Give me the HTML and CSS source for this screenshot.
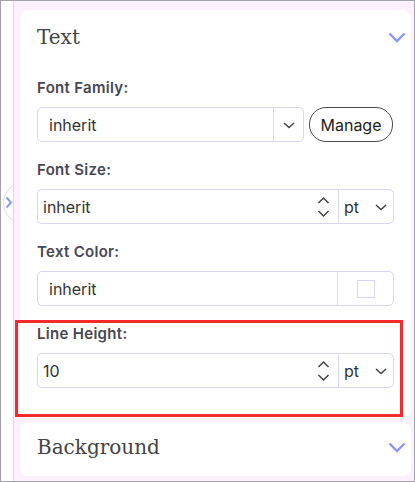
FILE: index.html
```html
<!DOCTYPE html>
<html>
<head>
<meta charset="utf-8">
<link rel="stylesheet" href="styles.css">
</head>
<body>
<div class="frame">
  <div class="gutter">
    <div class="toggle">
      <svg class="toggle-icon" width="8" height="13" viewBox="0 0 8 13"><path d="M1.5 1.5 L6 6.5 L1.5 11.5" fill="none" stroke="#8e96f6" stroke-width="2"/></svg>
    </div>
  </div>
  <div class="panel">
    <section class="card">
      <div class="card-head">
        <h2 class="card-title">Text</h2>
        <svg class="head-chev" width="18" height="11" viewBox="0 0 18 11"><path d="M1.5 1.5 L9 9 L16.5 1.5" fill="none" stroke="#8e96f6" stroke-width="2.4"/></svg>
      </div>
      <div class="card-body">
        <div class="field">
          <label class="label">Font Family:</label>
          <div class="row">
            <div class="box select-box">
              <span class="val val-wide">inherit</span>
              <span class="sel-btn"><svg width="12" height="7" viewBox="0 0 12 7"><path d="M1 1 L6 5.5 L11 1" fill="none" stroke="#444" stroke-width="1.5"/></svg></span>
            </div>
            <button class="manage">Manage</button>
          </div>
        </div>
        <div class="field">
          <label class="label">Font Size:</label>
          <div class="row">
            <div class="box num-box">
              <span class="val val-num">inherit</span>
              <svg class="spin" width="13" height="22" viewBox="0 0 13 22"><path d="M1.5 7 L6.5 2 L11.5 7 M1.5 15 L6.5 20 L11.5 15" fill="none" stroke="#444" stroke-width="1.5"/></svg>
            </div>
            <div class="box unit-box">
              <span class="unit">pt</span>
              <svg width="12" height="7" viewBox="0 0 12 7"><path d="M1 1 L6 5.5 L11 1" fill="none" stroke="#444" stroke-width="1.5"/></svg>
            </div>
          </div>
        </div>
        <div class="field">
          <label class="label">Text Color:</label>
          <div class="box color-box">
            <span class="val val-wide">inherit</span>
            <span class="swatch-cell"><span class="swatch"></span></span>
          </div>
        </div>
        <div class="field highlight">
          <label class="label">Line Height:</label>
          <div class="row">
            <div class="box num-box">
              <span class="val val-num">10</span>
              <svg class="spin" width="13" height="22" viewBox="0 0 13 22"><path d="M1.5 7 L6.5 2 L11.5 7 M1.5 15 L6.5 20 L11.5 15" fill="none" stroke="#444" stroke-width="1.5"/></svg>
            </div>
            <div class="box unit-box">
              <span class="unit">pt</span>
              <svg width="12" height="7" viewBox="0 0 12 7"><path d="M1 1 L6 5.5 L11 1" fill="none" stroke="#444" stroke-width="1.5"/></svg>
            </div>
          </div>
        </div>
      </div>
    </section>
    <section class="card card-collapsed">
      <div class="card-head">
        <h2 class="card-title">Background</h2>
        <svg class="head-chev" width="18" height="11" viewBox="0 0 18 11"><path d="M1.5 1.5 L9 9 L16.5 1.5" fill="none" stroke="#8e96f6" stroke-width="2.4"/></svg>
      </div>
    </section>
  </div>
</div>
</body>
</html>
```

FILE: styles.css
```css
* { box-sizing: border-box; }
html, body { margin: 0; padding: 0; background: #fff; }
body { font-family: Inter, "Noto Sans", sans-serif; color: #333; }

.frame {
  width: 415px;
  height: 482px;
  border: 1px solid #a2a2a8;
  display: flex;
  position: relative;
  overflow: hidden;
  background: #fff;
}

.gutter {
  width: 12px;
  flex: none;
  position: relative;
}

.toggle {
  position: absolute;
  left: 2px;
  top: 181px;
  width: 42px;
  height: 42px;
  border-radius: 50%;
  border: 1px solid #dcdce4;
  background: #fff;
}
.toggle-icon {
  position: absolute;
  left: 1px;
  top: 13px;
}

.panel {
  flex: 1;
  position: relative;
  z-index: 1;
  border-left: 1px solid #ddd3f6;
  background: #fbf0fb;
  padding: 9px 3px 0 6px;
  display: flex;
  flex-direction: column;
  gap: 4px;
}

.card {
  background: #fff;
  border-radius: 8px;
}

.card-head {
  height: 54px;
  display: flex;
  align-items: center;
  justify-content: space-between;
  padding: 0 5px 0 17px;
}
.card-collapsed .card-head { padding-bottom: 4px; }
.card-title {
  margin: 0;
  font-family: "DejaVu Serif", serif;
  font-weight: normal;
  font-size: 20px;
  color: #444;
}
.head-chev { display: block; }

.card-body {
  padding: 14px 17px 30px;
  display: flex;
  flex-direction: column;
  gap: 18px;
}

.field { position: relative; }
.label {
  display: block;
  font-size: 15px;
  font-weight: 600;
  letter-spacing: 0.3px;
  line-height: 20px;
  color: #474753;
  margin-bottom: 9px;
}

.row {
  display: flex;
  align-items: center;
  gap: 5px;
}

.box {
  height: 35px;
  border: 1px solid #d8d5f2;
  border-radius: 5px;
  display: flex;
  align-items: center;
  background: #fff;
}
.val {
  font-size: 16px;
  color: #333;
  flex: 1;
}
.val-wide { padding-left: 11px; }
.val-num { padding-left: 5px; }

.select-box { width: 267px; }
.sel-btn {
  width: 30px;
  height: 100%;
  border-left: 1px solid #d8d5f2;
  display: flex;
  align-items: center;
  justify-content: center;
}
.sel-btn svg { display: block; margin-top: 1px; }

.manage {
  height: 35px;
  width: 84px;
  border: 1px solid #4a4a52;
  border-radius: 17px;
  background: #fff;
  font-family: Inter, "Noto Sans", sans-serif;
  font-size: 16px;
  color: #222;
  padding: 0;
}

.num-box {
  flex: 1;
  border-right: none;
  border-radius: 5px 0 0 5px;
  padding-right: 8px;
}
.row .num-box + .unit-box { margin-left: -5px; }
.spin { display: block; }

.unit-box {
  width: 56px;
  border-radius: 0 5px 5px 0;
  padding: 0 6px 0 5px;
  justify-content: space-between;
}
.unit { font-size: 16px; color: #333; }
.unit-box svg { display: block; margin-top: 1px; }

.color-box { width: 100%; }
.swatch-cell {
  width: 56px;
  height: 100%;
  border-left: 1px solid #d8d5f2;
  display: flex;
  align-items: center;
  justify-content: center;
}
.swatch {
  width: 18px;
  height: 18px;
  border: 1px solid #d8d5f2;
}

.highlight::after {
  content: "";
  position: absolute;
  left: -22px;
  top: -4px;
  right: -9px;
  bottom: -29px;
  border: 3px solid #f42a2a;
  pointer-events: none;
}
```
